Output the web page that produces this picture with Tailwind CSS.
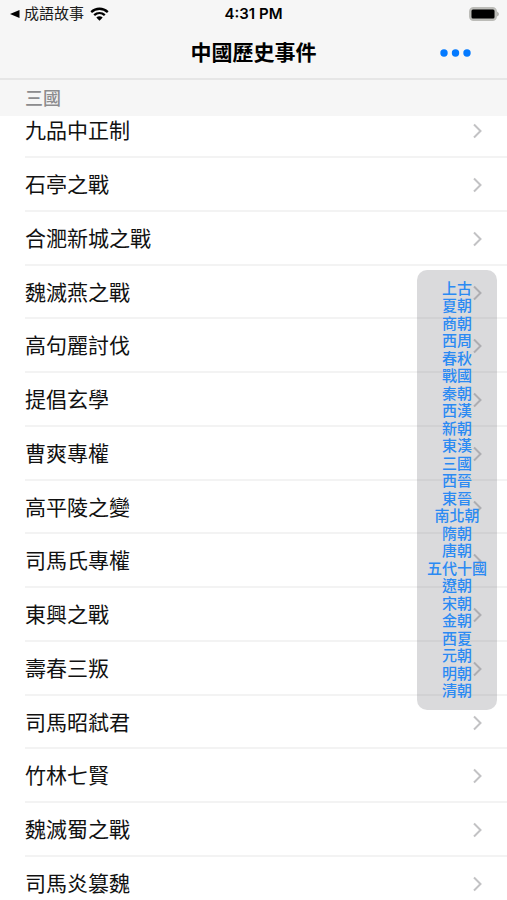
<!DOCTYPE html>
<html lang="zh-Hant">
<head>
<meta charset="utf-8">
<meta name="viewport" content="width=device-width, initial-scale=1">
<title>中國歷史事件</title>
<script src="https://cdn.jsdelivr.net/npm/@tailwindcss/browser@4"></script>
</head>
<body class="relative flex h-screen flex-col overflow-hidden bg-white font-['Inter','Noto_Sans_CJK_TC',sans-serif] text-black">
<svg class="hidden" aria-hidden="true">
  <symbol id="chevron" viewBox="0 0 10 16"><path d="M1.5 1.5 8 8l-6.5 6.5" fill="none" stroke="#c2c2c4" stroke-width="2"/></symbol>
</svg>

<header class="relative z-10 shrink-0 bg-[#f6f6f6]">
  <div class="grid h-7 grid-cols-[1fr_auto_1fr] items-center pl-2 pr-2 text-[15px] leading-5">
    <a href="#" class="flex items-center gap-1 text-[#1c1c1c]">
      <svg class="h-2 w-3" viewBox="0 0 12 8" aria-hidden="true"><path d="M2 4 11.5 0v8z"/></svg>
      <span>成語故事</span>
      <svg class="ml-0.5 h-[14px] w-[19px]" viewBox="0 0 19 14" aria-hidden="true">
        <path d="M1.2 5.2C6 .6 13 .6 17.8 5.2M4.2 8.2c3.1-2.9 7.5-2.9 10.6 0" fill="none" stroke="#000" stroke-width="2.3"/>
        <path d="M6.3 10.5c1.9-1.6 4.5-1.6 6.4 0L9.5 13.7z"/>
      </svg>
    </a>
    <time class="font-semibold">4:31 PM</time>
    <svg class="h-[14px] w-[30px] justify-self-end" viewBox="0 0 30 14" role="img" aria-label="電量">
      <rect x="1" y="1" width="26" height="12" rx="3.500" fill="#b4b4b0" stroke="#bcbcb8" stroke-width="2"/>
      <rect x="2.500" y="2.500" width="23" height="9" rx="1.500" fill="#000"/>
      <path d="M28 4.500q2 1 2 2.500t-2 2.500z" fill="#b4b4b0"/>
    </svg>
  </div>
  <div class="grid h-[52px] grid-cols-[1fr_auto_1fr] items-center border-b-2 border-[#e6e6e6] pr-9">
    <h1 class="col-start-2 pl-9 text-[21px] leading-7 font-bold">中國歷史事件</h1>
    <button type="button" aria-label="更多" class="justify-self-end">
      <svg class="h-2 w-[31px]" viewBox="0 0 31 8" fill="#047aff" aria-hidden="true"><circle cx="4" cy="4" r="3.700"/><circle cx="15.500" cy="4" r="3.700"/><circle cx="27" cy="4" r="3.700"/></svg>
    </button>
  </div>
  <h2 class="flex h-9 items-center pt-0.5 pl-[25px] text-lg leading-6 font-medium text-[#8c8c8e]">三國</h2>
</header>

<main>
  <ul class="-mt-3 pl-[25px] text-[21px] leading-8 text-[#111] [&_a]:flex [&_a]:h-full [&_a]:items-center [&_a]:justify-between [&_a]:pt-0.5 [&_a]:pr-6 [&_svg]:h-4 [&_svg]:w-[11px] [&>li]:h-[54px] [&>li]:border-b-2 [&>li]:border-[#f3f3f3] [&>li:nth-child(4n)]:h-[53px]">
    <li><a href="#">九品中正制<svg aria-hidden="true"><use href="#chevron"/></svg></a></li>
    <li><a href="#">石亭之戰<svg aria-hidden="true"><use href="#chevron"/></svg></a></li>
    <li><a href="#">合淝新城之戰<svg aria-hidden="true"><use href="#chevron"/></svg></a></li>
    <li><a href="#">魏滅燕之戰<svg aria-hidden="true"><use href="#chevron"/></svg></a></li>
    <li><a href="#">高句麗討伐<svg aria-hidden="true"><use href="#chevron"/></svg></a></li>
    <li><a href="#">提倡玄學<svg aria-hidden="true"><use href="#chevron"/></svg></a></li>
    <li><a href="#">曹爽專權<svg aria-hidden="true"><use href="#chevron"/></svg></a></li>
    <li><a href="#">高平陵之變<svg aria-hidden="true"><use href="#chevron"/></svg></a></li>
    <li><a href="#">司馬氏專權<svg aria-hidden="true"><use href="#chevron"/></svg></a></li>
    <li><a href="#">東興之戰<svg aria-hidden="true"><use href="#chevron"/></svg></a></li>
    <li><a href="#">壽春三叛<svg aria-hidden="true"><use href="#chevron"/></svg></a></li>
    <li><a href="#">司馬昭弒君<svg aria-hidden="true"><use href="#chevron"/></svg></a></li>
    <li><a href="#">竹林七賢<svg aria-hidden="true"><use href="#chevron"/></svg></a></li>
    <li><a href="#">魏滅蜀之戰<svg aria-hidden="true"><use href="#chevron"/></svg></a></li>
    <li><a href="#">司馬炎篡魏<svg aria-hidden="true"><use href="#chevron"/></svg></a></li>
  </ul>
</main>

<nav aria-label="朝代索引" class="absolute top-[270px] right-[10px] grid h-[440px] w-20 auto-rows-fr items-center rounded-[10px] bg-[#75757c]/27 py-[10px] text-center text-[15px] leading-4 font-medium text-[#2b8af3]">
  <a href="#">上古</a>
  <a href="#">夏朝</a>
  <a href="#">商朝</a>
  <a href="#">西周</a>
  <a href="#">春秋</a>
  <a href="#">戰國</a>
  <a href="#">秦朝</a>
  <a href="#">西漢</a>
  <a href="#">新朝</a>
  <a href="#">東漢</a>
  <a href="#">三國</a>
  <a href="#">西晉</a>
  <a href="#">東晉</a>
  <a href="#">南北朝</a>
  <a href="#">隋朝</a>
  <a href="#">唐朝</a>
  <a href="#">五代十國</a>
  <a href="#">遼朝</a>
  <a href="#">宋朝</a>
  <a href="#">金朝</a>
  <a href="#">西夏</a>
  <a href="#">元朝</a>
  <a href="#">明朝</a>
  <a href="#">清朝</a>
</nav>
</body>
</html>
